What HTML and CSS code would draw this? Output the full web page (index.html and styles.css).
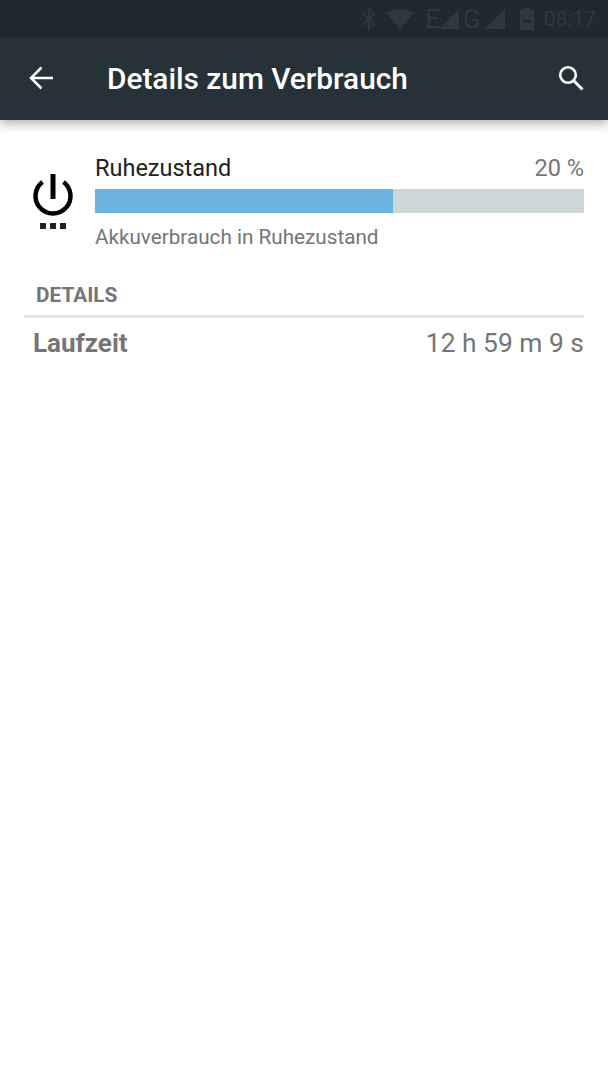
FILE: index.html
```html
<!DOCTYPE html>
<html>
  <head>
    <title>Details zum Verbrauch</title>
    <link rel="stylesheet" href="styles.css">
  </head>
  <body>
    <div class="status-bar">
      <svg class="st-bt" width="14" height="24" viewBox="0 0 14 24"><path d="M1 6l11 11-5 5V2l5 5L1 18" fill="none" stroke="#2e383d" stroke-width="2"/></svg>
      <svg class="st-wifi" width="28" height="20" viewBox="0 0 28 20"><path d="M0 4Q14-4 28 4L14 20z" fill="#2e383d"/></svg>
      <span class="st-text st-e">E</span>
      <svg class="st-signal" width="20" height="20" viewBox="0 0 20 20"><path d="M0 20L20 0v20z" fill="#2e383d"/></svg>
      <span class="st-text st-g">G</span>
      <svg class="st-signal" width="20" height="20" viewBox="0 0 20 20"><path d="M0 20L20 0v20z" fill="#2e383d"/></svg>
      <svg class="st-batt" width="14" height="24" viewBox="0 0 14 24"><path d="M4 1h6v2h4v20H0V3h4z" fill="#2e383d"/><rect x="3" y="13" width="8" height="3" fill="#1f292e"/></svg>
      <span class="st-time">08:17</span>
    </div>

    <header class="toolbar">
      <svg class="back-icon" width="24" height="24" viewBox="0 0 24 24"><path d="M24 12H2M12.500 1.500L2 12l10.500 10.500" fill="none" stroke="#fff" stroke-width="2.500"/></svg>
      <h1 class="toolbar-title">Details zum Verbrauch</h1>
      <svg class="search-icon" width="26" height="26" viewBox="0 0 26 26"><circle cx="10" cy="10" r="7.800" fill="none" stroke="#fff" stroke-width="2.600"/><path d="M15.500 15.500l9 9" stroke="#fff" stroke-width="3" fill="none"/></svg>
    </header>

    <main class="content">
      <section class="usage-row">
        <svg class="power-icon" width="42" height="58" viewBox="0 0 42 58">
          <path d="M10.500 8A17.500 17.500 0 1 0 31.500 8" fill="none" stroke="#000" stroke-width="4.500"/>
          <rect x="18.500" y="0" width="5" height="25" fill="#000"/>
          <rect x="8" y="49" width="6" height="6" fill="#222"/>
          <rect x="18" y="49" width="6" height="6" fill="#222"/>
          <rect x="28" y="49" width="6" height="6" fill="#222"/>
        </svg>
        <div class="usage-info">
          <div class="usage-head">
            <span class="usage-name">Ruhezustand</span>
            <span class="usage-pct">20 %</span>
          </div>
          <div class="bar"><div class="bar-fill" style="width: 61%"></div></div>
          <div class="usage-sub">Akkuverbrauch in Ruhezustand</div>
        </div>
      </section>

      <h2 class="section-title">DETAILS</h2>
      <div class="detail-row">
        <span class="detail-label">Laufzeit</span>
        <span class="detail-value">12 h 59 m 9 s</span>
      </div>
    </main>
  </body>
</html>
```

FILE: styles.css
```css
* {
  box-sizing: border-box;
}
body,
html {
  margin: 0;
  background: #fff;
  font-family: Roboto, sans-serif;
}
.status-bar {
  height: 37px;
  background: #1f292e;
  display: flex;
  align-items: center;
  justify-content: flex-end;
  padding-right: 12px;
  color: #2e383d;
}
.st-bt {
  margin-right: 10px;
}
.st-wifi {
  margin-right: 11px;
}
.st-text {
  font-size: 26px;
  line-height: 1;
}
.st-e {
  margin-right: -1px;
}
.st-g {
  margin: 0 4px 0 4px;
}
.st-batt {
  margin: 0 10px 0 15px;
}
.st-time {
  font-size: 21px;
}
.toolbar {
  height: 83px;
  background: #263238;
  display: flex;
  align-items: center;
  padding: 0 24px 2px 29px;
  box-shadow: 0 4px 10px rgba(0, 0, 0, 0.3);
  position: relative;
}
.toolbar-title {
  margin: 2px 0 0 54px;
  flex-grow: 1;
  font-size: 29.800px;
  font-weight: 500;
  color: #fff;
}
.usage-row {
  display: flex;
  padding: 33px 24px 0 32px;
}
.power-icon {
  margin-top: 21px;
  flex-shrink: 0;
}
.usage-info {
  flex-grow: 1;
  margin-left: 21px;
}
.usage-head {
  display: flex;
  justify-content: space-between;
  height: 36px;
  align-items: center;
  padding-bottom: 6px;
}
.usage-name {
  font-size: 23.500px;
  color: #212121;
}
.usage-pct {
  font-size: 23.500px;
  color: #757575;
}
.bar {
  height: 24px;
  background: #cdd6d8;
}
.bar-fill {
  height: 100%;
  background: #6cb5e2;
}
.usage-sub {
  margin-top: 12px;
  font-size: 20.700px;
  color: #757575;
}
.section-title {
  margin: 34px 24px 0 24px;
  padding: 0 0 8px 12px;
  border-bottom: 3px solid #e3e3e3;
  font-size: 20.800px;
  font-weight: 700;
  color: #757575;
}
.detail-row {
  display: flex;
  justify-content: space-between;
  align-items: center;
  margin: 10px 24px 0 33px;
}
.detail-label {
  font-size: 26px;
  font-weight: 700;
  color: #757575;
}
.detail-value {
  font-size: 26.400px;
  color: #757575;
}
```
